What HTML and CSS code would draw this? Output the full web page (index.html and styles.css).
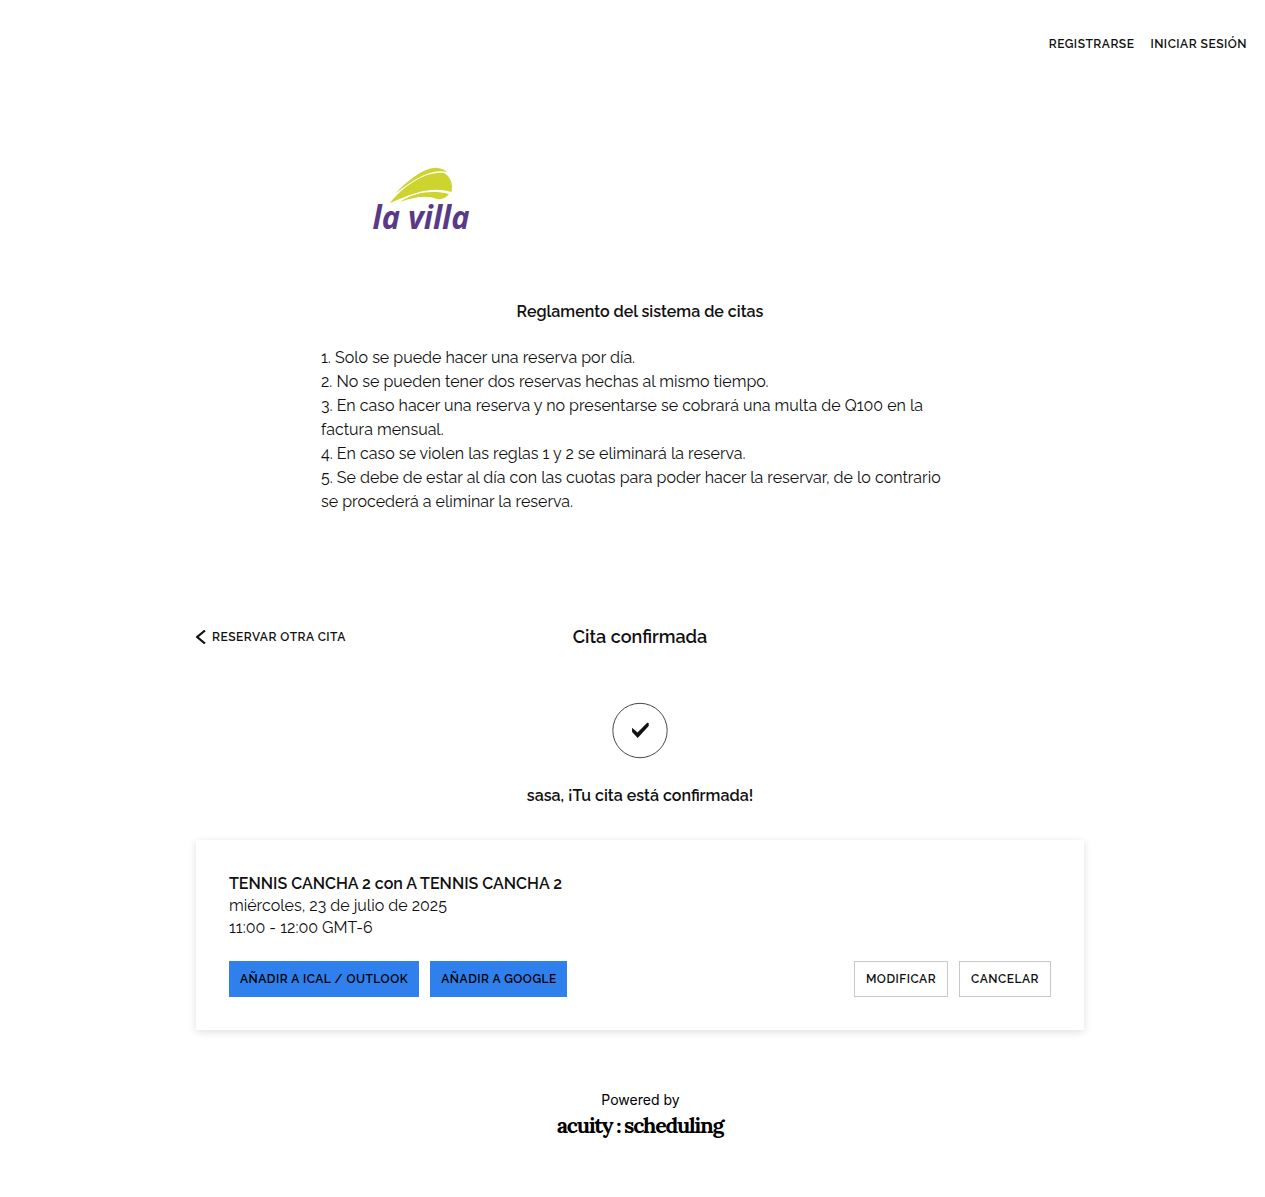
FILE: index.html
```html
<!DOCTYPE html>
<html lang="es">
<head>
<meta charset="utf-8">
<title>Cita confirmada</title>
<link rel="stylesheet" href="styles.css">
</head>
<body>
<div class="page">
  <nav class="account"><a>REGISTRARSE</a><a>INICIAR SESIÓN</a></nav>
  <header class="intro">
    <svg class="logo" width="110" height="76" viewBox="0 0 110 76" role="img" aria-label="la villa">
      <g fill="#cdd32f">
        <path d="M26 29C36 18 55 2 68 4Q74 5 77 8C60 4 42 17 26 29Z"/>
        <path d="M20 39C33 23 54 7 74 9Q84 15 81.5 28C62 22 45 28 20 39Z"/>
        <path d="M30 38C45 28 62 26 79 30Q75 36 67 35C56 31 44 33 30 38Z"/>
      </g>
      <text x="2.5" y="65" textLength="97" lengthAdjust="spacingAndGlyphs">la villa</text>
    </svg>
    <h1>Reglamento del sistema de citas</h1>
    <ol class="rules">
      <li>1. Solo se puede hacer una reserva por día.</li>
      <li>2. No se pueden tener dos reservas hechas al mismo tiempo.</li>
      <li>3. En caso hacer una reserva y no presentarse se cobrará una multa de Q100 en la factura mensual.</li>
      <li>4. En caso se violen las reglas 1 y 2 se eliminará la reserva.</li>
      <li>5. Se debe de estar al día con las cuotas para poder hacer la reservar, de lo contrario se procederá a eliminar la reserva.</li>
    </ol>
  </header>
  <main class="content">
    <div class="heading">
      <a class="back"><svg width="10" height="14" viewBox="0 0 10 14"><path d="M9 .5 1.2 7 9 13.5" fill="none" stroke="#111" stroke-width="2.2"/></svg><span>RESERVAR OTRA CITA</span></a>
      <h2>Cita confirmada</h2>
    </div>
    <svg class="check" width="56" height="56" viewBox="0 0 56 56"><circle cx="28" cy="27.5" r="27.2" fill="none" stroke="#333" stroke-width=".9"/><path d="M20.1 24.8 25.5 29.6 35.2 19.8 36.7 19.9V23L25.7 34.9 20.1 28.9Z" fill="#111"/></svg>
    <h3>sasa, ¡Tu cita está confirmada!</h3>
    <section class="card">
      <div class="service">TENNIS CANCHA 2 con A TENNIS CANCHA 2</div>
      <div>miércoles, 23 de julio de 2025</div>
      <div>11:00 - 12:00 GMT-6</div>
      <div class="actions">
        <button class="btn primary ical">AÑADIR A ICAL / OUTLOOK</button>
        <button class="btn primary google">AÑADIR A GOOGLE</button>
        <button class="btn modify">MODIFICAR</button>
        <button class="btn cancel">CANCELAR</button>
      </div>
    </section>
  </main>
  <footer class="footer">
    <div class="powered">Powered by</div>
    <div class="brand">acuity<span class="colon">:</span>scheduling</div>
  </footer>
</div>
</body>
</html>
```
FILE: styles.css
```css
* { box-sizing: border-box; }
html { overflow: hidden; background: #fff; }
body {
  margin: 0;
  font: 16px/24px Raleway, Lato, sans-serif;
  color: #111;
}
h1, h2, h3 { margin: 0; font-weight: 600; font-size: 16px; }

.page { width: 1280px; height: 1197px; }

.account {
  display: flex;
  justify-content: flex-end;
  gap: 16px;
  padding: 32px 33px 0 0;
  font-size: 12px;
  font-weight: 600;
  letter-spacing: .5px;
}

.intro { width: 638px; margin: 108px auto 0; }
.logo { display: block; margin-left: 49px; }
.logo text { font: italic 700 33px "Open Sans", sans-serif; fill: #5a3a87; }
.intro h1 { margin-top: 60px; text-align: center; }
.rules { margin: 22px 0 0; padding: 0; list-style: none; }

.content {
  display: flex;
  flex-direction: column;
  align-items: center;
  width: 888px;
  margin: 111px auto 0;
}
.heading {
  display: grid;
  grid-template-columns: 1fr auto 1fr;
  align-items: center;
  width: 100%;
  height: 24px;
}
.back {
  display: flex;
  align-items: center;
  gap: 6px;
  font-size: 12px;
  font-weight: 600;
  letter-spacing: .5px;
}
.heading h2 { font-size: 18px; }
.check { margin-top: 54px; overflow: visible; }
.content h3 { margin-top: 25px; }

.card {
  width: 100%;
  height: 190px;
  margin-top: 32px;
  padding: 33px;
  line-height: 22px;
  box-shadow: 0 2px 8px rgba(0, 0, 0, .13);
}
.service { font-weight: 600; }
.actions { display: flex; gap: 11px; margin-top: 22px; }
.btn {
  height: 36px;
  padding: 0;
  border: 1px solid #c8c8c8;
  background: #fff;
  color: #111;
  font: 600 12px/20px Raleway, Lato, sans-serif;
  letter-spacing: .5px;
}
.primary { border-color: #2f80ed; background: #2f80ed; color: #000; }
.ical { width: 190px; }
.google { width: 137px; padding-left: 1px; }
.modify { width: 94px; margin-left: auto; }
.cancel { width: 92px; }

.footer { margin-top: 60px; text-align: center; color: #000; }
.powered { padding-left: 1px; font: 14px/20px Inter, sans-serif; }
.brand {
  margin-top: 1px;
  font: 700 21.5px/28px Lora, "Liberation Serif", serif;
  letter-spacing: -1.3px;
}
.colon { margin: 0 2px 0 3px; font-family: Inter, sans-serif; letter-spacing: 0; font-size: 20px; line-height: 20px; }
```
